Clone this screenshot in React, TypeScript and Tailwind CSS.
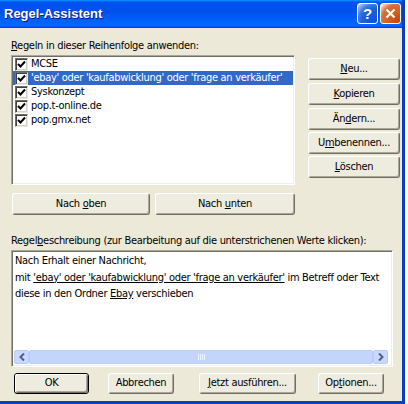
import type { ReactNode } from "react";

const rules = [
  { name: "MCSE", selected: false },
  { name: "'ebay' oder 'kaufabwicklung' oder 'frage an verkäufer'", selected: true },
  { name: "Syskonzept", selected: false },
  { name: "pop.t-online.de", selected: false },
  { name: "pop.gmx.net", selected: false },
];

const Btn = ({ children, className = "" }: { children: ReactNode; className?: string }) => (
  <div
    className={`flex items-center justify-center rounded-[3px] border border-t-white border-l-white border-r-[#716F64] border-b-[#716F64] bg-[#EEEBDF] shadow-[inset_-1px_-1px_0_#ACA899] text-[11px] text-black whitespace-nowrap ${className}`}
  >
    {children}
  </div>
);

const Check = () => (
  <div className="w-[13px] h-[13px] shrink-0 bg-white border border-t-[#716F64] border-l-[#716F64] border-r-[#ECE9D8] border-b-[#ECE9D8] shadow-[inset_1px_1px_0_#404040,inset_-1px_-1px_0_#D4D0C8] flex items-center justify-center">
    <svg width="9" height="9" viewBox="0 0 9 9">
      <polyline points="1,4 3.5,6.5 8,1.5" fill="none" stroke="#000" strokeWidth="2" />
    </svg>
  </div>
);

export default function App() {
  return (
    <div className="w-[408px] h-[404px] bg-white flex font-['DejaVu_Sans_Condensed','Liberation_Sans',sans-serif] text-[11px] tracking-[-0.3px] text-black overflow-hidden">
      <div className="w-[405px] h-[404px] flex flex-col border-r-[3px] border-b-[3px] border-[#0B3CC4] bg-[#ECE9D8]">
        {/* Title bar */}
        <div className="h-[28px] shrink-0 flex items-center justify-between pl-[4px] pr-[1px] bg-[linear-gradient(180deg,#0997ff,#0053ee_8%,#0050ee_40%,#0066ff_88%,#0066ff_93%,#005bff_95%,#003dd7_96%,#003dd7)]">
          <span className="text-white font-bold text-[13px] tracking-normal font-['Liberation_Sans',sans-serif] [text-shadow:1px_1px_#0f1089]">
            Regel-Assistent
          </span>
          <div className="flex gap-[2px] mb-[2px]">
            <div className="w-[21px] h-[21px] rounded-[3px] border border-white flex items-center justify-center bg-[radial-gradient(circle_at_90%_90%,#0054e9_0%,#2263d5_55%,#4479e4_70%,#a3bbec_90%,white_100%)]">
              <span className="text-white font-bold text-[15px] leading-none font-['Liberation_Sans',sans-serif]">?</span>
            </div>
            <div className="w-[21px] h-[21px] rounded-[3px] border border-white flex items-center justify-center bg-[radial-gradient(circle_at_90%_90%,#cc4600_0%,#dc6527_55%,#cd7546_70%,#ffccb2_90%,white_100%)]">
              <svg width="11" height="11" viewBox="0 0 11 11">
                <path d="M1.5 1.5 L9.5 9.5 M9.5 1.5 L1.5 9.5" stroke="#fff" strokeWidth="2.2" />
              </svg>
            </div>
          </div>
        </div>

        {/* Body */}
        <div className="flex flex-col pl-[11px] pt-[11px]">
          <div className="h-[14px] leading-[14px]">
            <u>R</u>egeln in dieser Reihenfolge anwenden:
          </div>
          <div className="flex mt-[2px]">
            <div className="w-[284px] h-[130px] bg-white border border-t-[#ACA899] border-l-[#ACA899] border-r-white border-b-white shadow-[inset_1px_1px_0_#716F64,inset_-1px_-1px_0_#F1EFE2] p-[1px]">
              {rules.map((r) => (
                <div
                  key={r.name}
                  className={`h-[14px] flex items-center gap-[3px] pl-[2px] whitespace-nowrap ${r.selected ? "bg-[#316AC5] text-white" : ""}`}
                >
                  <Check />
                  <span>{r.name}</span>
                </div>
              ))}
            </div>
            <div className="flex flex-col ml-[13px] mt-[3px] w-[92px]">
              <Btn className="h-[22px]">
                <span><u>N</u>eu...</span>
              </Btn>
              <Btn className="h-[22px] mt-[3px]">
                <span><u>K</u>opieren</span>
              </Btn>
              <Btn className="h-[22px] mt-[3px]">
                <span>Än<u>d</u>ern...</span>
              </Btn>
              <Btn className="h-[22px] mt-[2px]">
                <span>U<u>m</u>benennen...</span>
              </Btn>
              <Btn className="h-[22px] mt-[2px]">
                <span><u>L</u>öschen</span>
              </Btn>
            </div>
          </div>

          <div className="flex mt-[8px] gap-[5px] ml-[1px]">
            <Btn className="w-[138px] h-[22px]">
              <span>Nach <u>o</u>ben</span>
            </Btn>
            <Btn className="w-[140px] h-[22px]">
              <span>Nach <u>u</u>nten</span>
            </Btn>
          </div>

          <div className="h-[14px] leading-[14px] mt-[19px]">
            Regel<u>b</u>eschreibung (zur Bearbeitung auf die unterstrichenen Werte klicken):
          </div>

          <div className="w-[382px] h-[117px] mt-[2px] bg-white border border-t-[#ACA899] border-l-[#ACA899] border-r-white border-b-white shadow-[inset_1px_1px_0_#716F64,inset_-1px_-1px_0_#F1EFE2] flex flex-col p-[1px]">
            <div className="flex-1 pl-[2px] pt-[1px] leading-[16.5px] whitespace-nowrap">
              <div>Nach Erhalt einer Nachricht,</div>
              <div>
                mit <u>'ebay' oder 'kaufabwicklung' oder 'frage an verkäufer'</u> im Betreff oder Text
              </div>
              <div>
                diese in den Ordner <u>Ebay</u> verschieben
              </div>
            </div>
            {/* horizontal scrollbar */}
            <div className="h-[14px] flex mb-[1px] mx-[1px] mr-[3px] bg-[#FEFEFB]">
              <div className="w-[15px] h-full rounded-[2px] border border-[#B9CCF7] bg-[#C9D8FC] flex items-center justify-center">
                <svg width="6" height="8" viewBox="0 0 6 8">
                  <polyline points="5,0.5 1.5,4 5,7.5" fill="none" stroke="#4D6185" strokeWidth="2" />
                </svg>
              </div>
              <div className="flex-1 h-full rounded-[2px] border border-[#B9CCF7] bg-[#C4D5FB] flex items-center justify-center gap-[1px]">
                <div className="w-[1px] h-[6px] bg-[#EEF4FE]" />
                <div className="w-[1px] h-[6px] bg-[#EEF4FE]" />
                <div className="w-[1px] h-[6px] bg-[#EEF4FE]" />
                <div className="w-[1px] h-[6px] bg-[#EEF4FE]" />
              </div>
              <div className="w-[15px] h-full rounded-[2px] border border-[#B9CCF7] bg-[#C9D8FC] flex items-center justify-center">
                <svg width="6" height="8" viewBox="0 0 6 8">
                  <polyline points="1,0.5 4.5,4 1,7.5" fill="none" stroke="#4D6185" strokeWidth="2" />
                </svg>
              </div>
            </div>
          </div>

          <div className="flex mt-[6px] ml-[3px] h-[21px]">
            <div className="w-[75px] h-[21px] border border-black rounded-[3px] flex">
              <Btn className="flex-1">OK</Btn>
            </div>
            <Btn className="w-[66px] ml-[19px]">Abbrechen</Btn>
            <Btn className="w-[97px] ml-[25px]">
              <span><u>J</u>etzt ausführen...</span>
            </Btn>
            <Btn className="w-[66px] ml-[22px]">
              <span>Op<u>t</u>ionen...</span>
            </Btn>
          </div>
        </div>
      </div>
    </div>
  );
}
